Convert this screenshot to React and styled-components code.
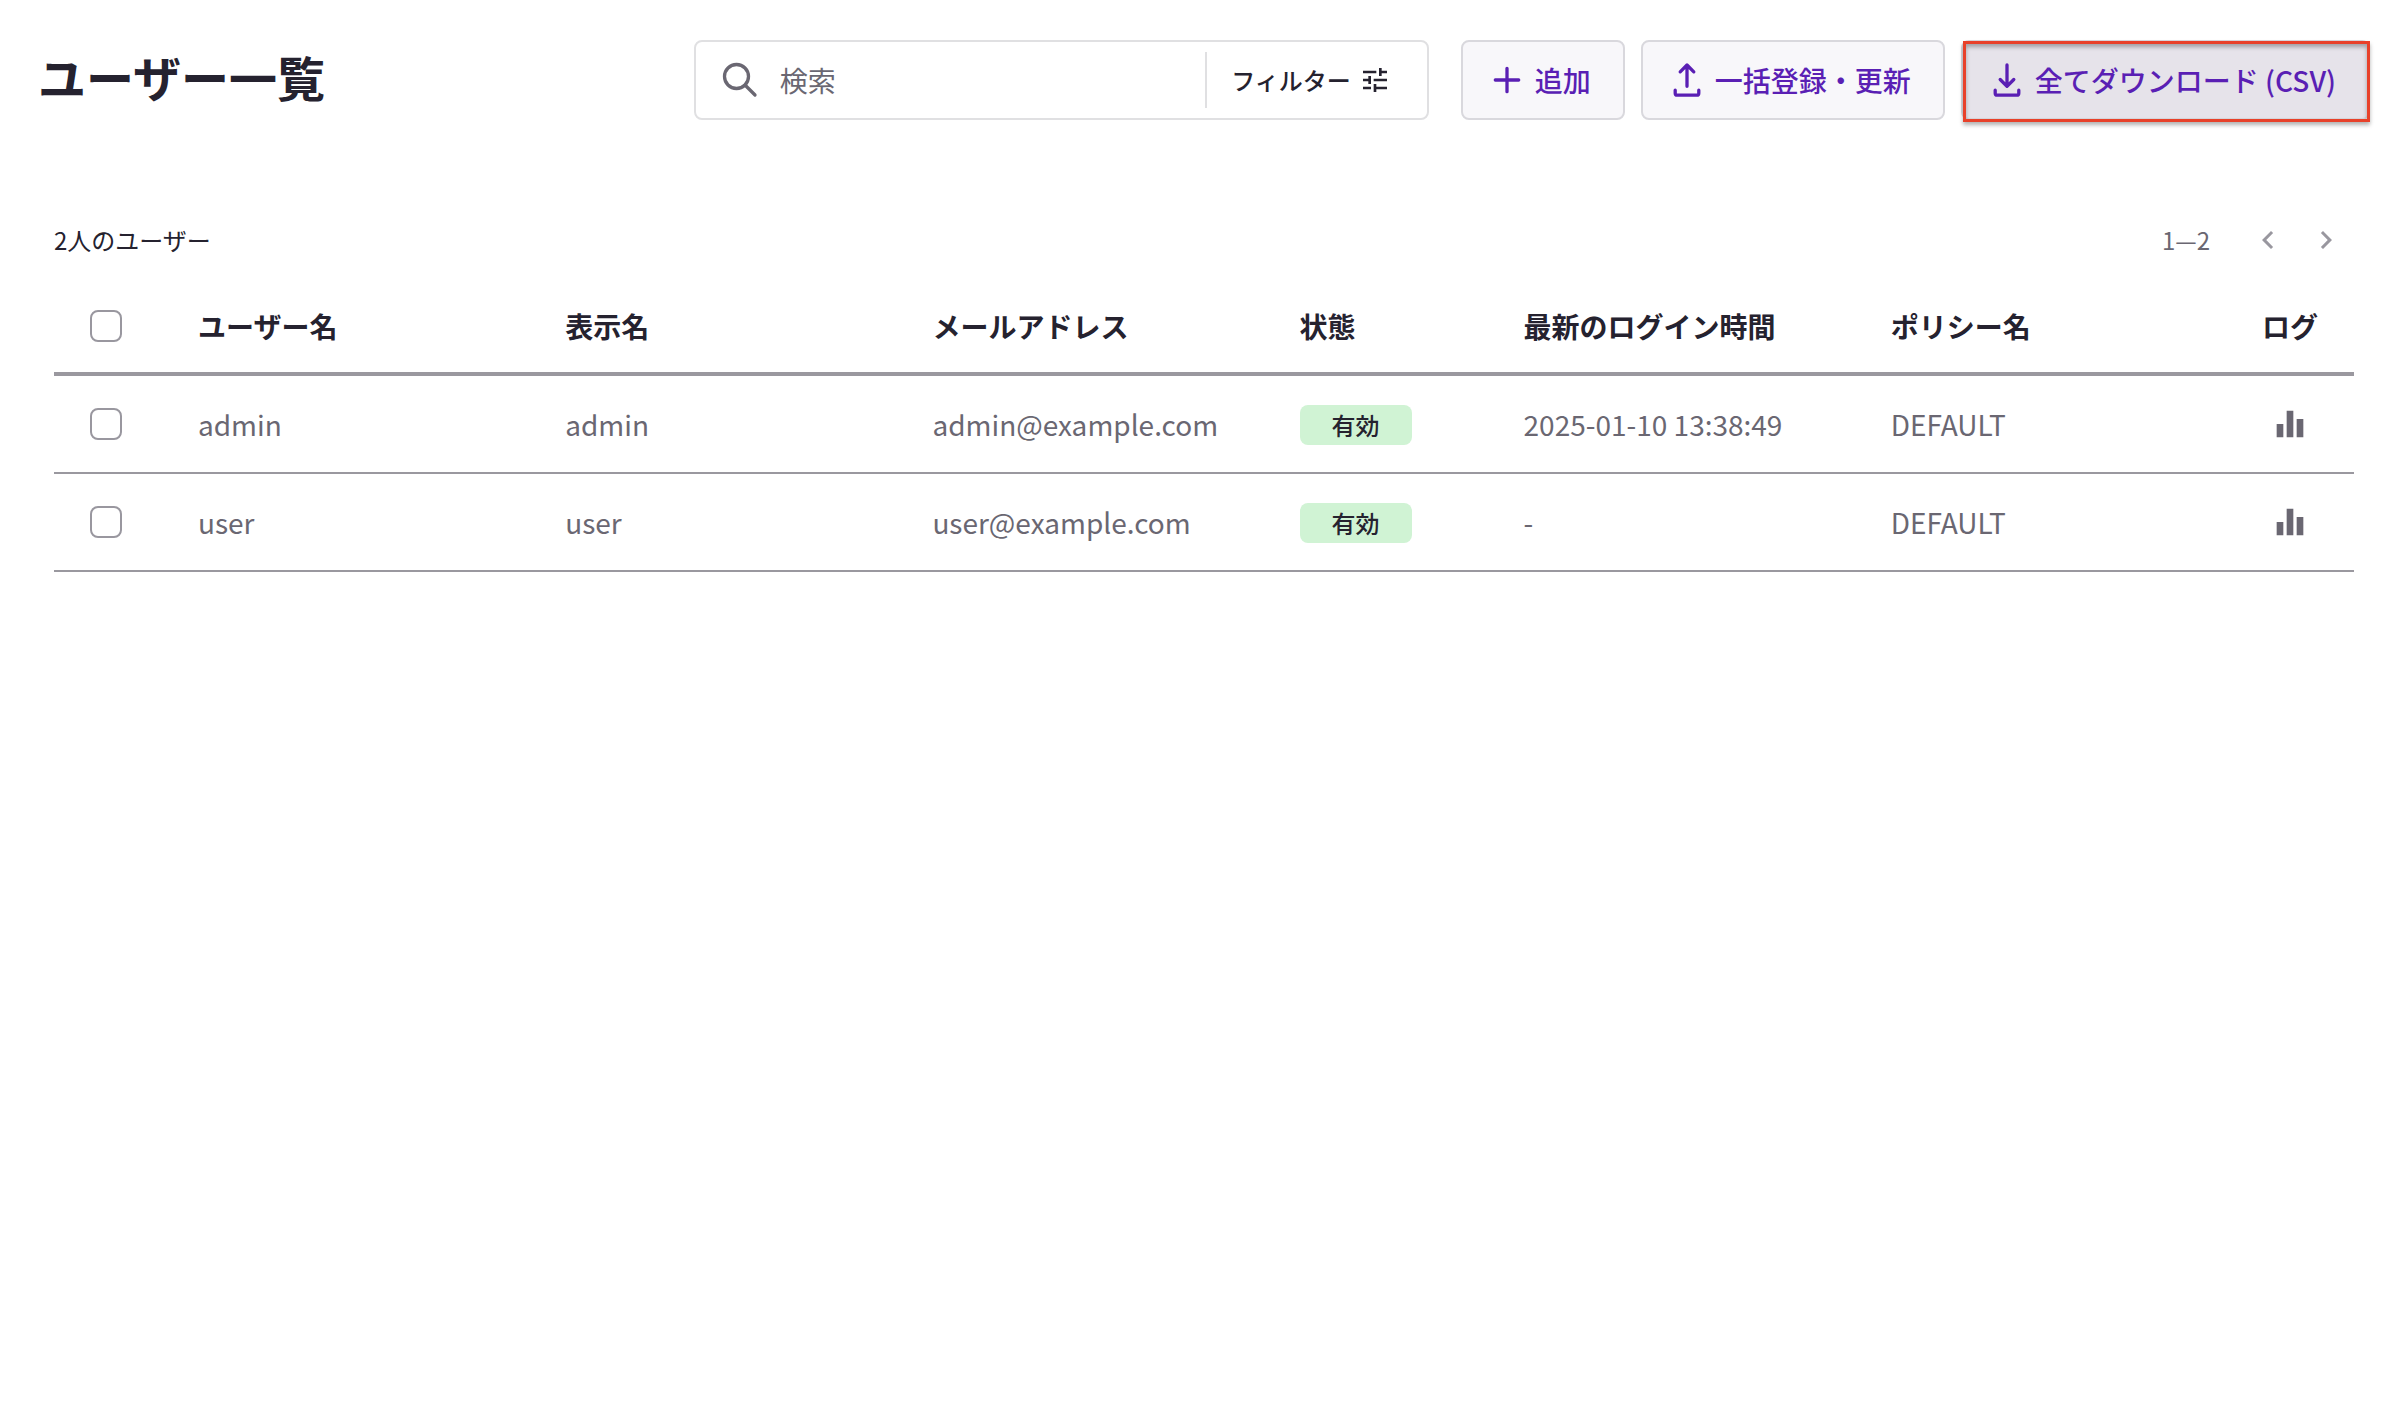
import React, { useState } from "react";
import styled, { createGlobalStyle } from "styled-components";

const users = [
  {
    name: "admin",
    displayName: "admin",
    email: "admin@example.com",
    status: "有効",
    lastLogin: "2025-01-10 13:38:49",
    policy: "DEFAULT",
  },
  {
    name: "user",
    displayName: "user",
    email: "user@example.com",
    status: "有効",
    lastLogin: "-",
    policy: "DEFAULT",
  },
];

const SearchIcon = () => (
  <StrokeIcon viewBox="0 0 40 40" $size={40}>
    <circle cx="16.5" cy="16.5" r="12" />
    <path d="M25 25l10 10" />
  </StrokeIcon>
);

const TuneIcon = () => (
  <FillIcon viewBox="0 0 24 24" $size={32}>
    <path d="M3 17v2h6v-2H3zM3 5v2h10V5H3zm10 16v-2h8v-2h-8v-2h-2v6h2zM7 9v2H3v2h4v2h2V9H7zm14 4v-2H11v2h10zm-6-4h2V7h4V5h-4V3h-2v6z" />
  </FillIcon>
);

const PlusIcon = () => (
  <StrokeIcon viewBox="0 0 40 40" $size={40}>
    <path d="M20 8.3v23.4M8.3 20h23.4" />
  </StrokeIcon>
);

const UploadIcon = () => (
  <StrokeIcon viewBox="0 0 40 40" $size={40}>
    <path d="M20 26.3V5.5M13.2 11.8L20 5l6.8 6.8M8.2 30.2v3q0 2 2 2h19.6q2 0 2-2v-3" />
  </StrokeIcon>
);

const DownloadIcon = () => (
  <StrokeIcon viewBox="0 0 40 40" $size={40}>
    <path d="M20 5v20.8M13.2 19.5l6.8 6.8 6.8-6.8M8.2 30.2v3q0 2 2 2h19.6q2 0 2-2v-3" />
  </StrokeIcon>
);

const ChevronLeftIcon = () => (
  <FillIcon viewBox="0 0 24 24" $size={36}>
    <path d="M15.41 7.41L14 6l-6 6 6 6 1.41-1.41L10.83 12z" />
  </FillIcon>
);

const ChevronRightIcon = () => (
  <FillIcon viewBox="0 0 24 24" $size={36}>
    <path d="M10 6L8.59 7.41 13.17 12l-4.58 4.59L10 18l6-6z" />
  </FillIcon>
);

const ChartIcon = () => (
  <FillIcon viewBox="0 0 24 24" $size={40}>
    <path d="M10 20h4V4h-4v16zm-6 0h4v-8H4v8zM16 9v11h4V9h-4z" />
  </FillIcon>
);

const App = () => {
  const [query, setQuery] = useState("");
  const [selected, setSelected] = useState([]);

  const toggleAll = () => {
    setSelected(selected.length === users.length ? [] : users.map((u) => u.name));
  };
  const toggleOne = (name) => {
    setSelected(
      selected.includes(name)
        ? selected.filter((n) => n !== name)
        : [...selected, name]
    );
  };

  return (
    <>
      <GlobalStyle />
      <Page>
        <Header>
          <Title>ユーザー一覧</Title>
          <SearchBar>
            <SearchLabel>
              <SearchIcon />
              <SearchInput
                type="text"
                aria-label="検索"
                placeholder="検索"
                value={query}
                onChange={(e) => setQuery(e.target.value)}
              />
            </SearchLabel>
            <FilterButton type="button">
              フィルター
              <TuneIcon />
            </FilterButton>
          </SearchBar>
          <Actions>
            <ActionButton type="button">
              <PlusIcon />
              追加
            </ActionButton>
            <ActionButton type="button">
              <UploadIcon />
              一括登録・更新
            </ActionButton>
            <Highlight>
              <ActionButton type="button" $active>
                <DownloadIcon />
                全てダウンロード (CSV)
              </ActionButton>
            </Highlight>
          </Actions>
        </Header>
        <main>
          <TableBar>
            <Count>2人のユーザー</Count>
            <Range>1—2</Range>
            <Pager aria-label="ページ">
              <PagerButton type="button" aria-label="前へ">
                <ChevronLeftIcon />
              </PagerButton>
              <PagerButton type="button" aria-label="次へ">
                <ChevronRightIcon />
              </PagerButton>
            </Pager>
          </TableBar>
          <Table>
            <colgroup>
              <Col $width={112} />
              <Col />
              <Col />
              <Col />
              <Col $width={224} />
              <Col />
              <Col />
              <Col $width={128} />
            </colgroup>
            <thead>
              <tr>
                <Th $check>
                  <Checkbox
                    type="checkbox"
                    aria-label="全て選択"
                    checked={selected.length === users.length}
                    onChange={toggleAll}
                  />
                </Th>
                <Th>ユーザー名</Th>
                <Th>表示名</Th>
                <Th>メールアドレス</Th>
                <Th>状態</Th>
                <Th>最新のログイン時間</Th>
                <Th>ポリシー名</Th>
                <Th $center>ログ</Th>
              </tr>
            </thead>
            <tbody>
              {users.map((user) => (
                <tr key={user.name}>
                  <Td $check>
                    <Checkbox
                      type="checkbox"
                      aria-label={user.name}
                      checked={selected.includes(user.name)}
                      onChange={() => toggleOne(user.name)}
                    />
                  </Td>
                  <Td>{user.name}</Td>
                  <Td>{user.displayName}</Td>
                  <Td>{user.email}</Td>
                  <Td>
                    <Badge>{user.status}</Badge>
                  </Td>
                  <Td>{user.lastLogin}</Td>
                  <Td>{user.policy}</Td>
                  <Td $center>
                    <LogButton type="button" aria-label="ログ">
                      <ChartIcon />
                    </LogButton>
                  </Td>
                </tr>
              ))}
            </tbody>
          </Table>
        </main>
      </Page>
    </>
  );
};

const GlobalStyle = createGlobalStyle`
  * {
    box-sizing: border-box;
  }
  body {
    margin: 0;
    background: #fff;
    color: #25222f;
    font-family: "Noto Sans CJK JP", sans-serif;
    font-size: 28px;
    line-height: 40px;
  }
  button,
  input {
    font: inherit;
    color: inherit;
  }
`;

const StrokeIcon = styled.svg`
  flex: none;
  display: block;
  width: ${(props) => props.$size}px;
  height: ${(props) => props.$size}px;
  fill: none;
  stroke: currentColor;
  stroke-width: 3.3;
  stroke-linecap: round;
  stroke-linejoin: round;
`;

const FillIcon = styled.svg`
  flex: none;
  display: block;
  width: ${(props) => props.$size}px;
  height: ${(props) => props.$size}px;
  fill: currentColor;
`;

const Page = styled.div`
  padding: 40px 36px 40px 38px;
`;

const Header = styled.header`
  display: flex;
  align-items: flex-start;
  gap: 32px;
`;

const Title = styled.h1`
  flex: 1;
  margin: 0;
  font-size: 48px;
  line-height: 72px;
  font-weight: 700;
  white-space: nowrap;
`;

const SearchBar = styled.div`
  flex: 0 1 735px;
  display: flex;
  align-items: center;
  height: 80px;
  border: 2px solid #e0e0e2;
  border-radius: 8px;
`;

const SearchLabel = styled.label`
  flex: 1;
  display: flex;
  align-items: center;
  gap: 20px;
  min-width: 0;
  padding-left: 24px;
  color: #6a6772;
`;

const SearchInput = styled.input`
  flex: 1;
  min-width: 0;
  padding: 0;
  border: none;
  outline: none;
  background: none;
  &::placeholder {
    color: #6a6772;
    opacity: 1;
  }
`;

const FilterButton = styled.button`
  display: flex;
  align-items: center;
  gap: 8px;
  height: 56px;
  padding: 0 36px 0 24px;
  border: none;
  border-left: 2px solid #e0e0e2;
  background: none;
  font-size: 24px;
  font-weight: 500;
  white-space: nowrap;
`;

const Actions = styled.div`
  display: flex;
  gap: 16px;
`;

const ActionButton = styled.button`
  display: flex;
  align-items: center;
  gap: 8px;
  height: 80px;
  padding: 0 32px 0 24px;
  border: 2px solid #d9d8dd;
  border-radius: 8px;
  background: ${(props) => (props.$active ? "#e6e3ea" : "#f8f7fa")};
  color: #5a1fb4;
  font-weight: 500;
  white-space: nowrap;
`;

/* marker frame laid over the button */
const Highlight = styled.div`
  position: relative;
  &::after {
    content: "";
    position: absolute;
    inset: 1px 0 -2px 2px;
    border: 3px solid #e8412a;
    box-shadow: 0 3px 4px rgba(0, 0, 0, 0.3),
      inset 0 3px 4px rgba(0, 0, 0, 0.3);
    pointer-events: none;
  }
`;

const TableBar = styled.div`
  display: flex;
  align-items: center;
  height: 80px;
  margin: 80px 18px 0 16px;
  font-size: 24px;
`;

const Count = styled.p`
  flex: 1;
  margin: 0;
`;

const Range = styled.span`
  color: #6a6772;
`;

const Pager = styled.nav`
  display: flex;
  gap: 6px;
  margin-left: 32px;
`;

const PagerButton = styled.button`
  padding: 8px;
  border: none;
  background: none;
  color: #99979f;
`;

const Table = styled.table`
  width: calc(100% - 32px);
  margin: 0 16px;
  border-spacing: 0;
  table-layout: fixed;
`;

const Col = styled.col`
  width: ${(props) => (props.$width ? `${props.$width}px` : "auto")};
`;

const Th = styled.th`
  height: 96px;
  padding: 0 ${(props) => (props.$center ? 0 : 32)}px;
  padding-left: ${(props) => (props.$check ? 36 : props.$center ? 0 : 32)}px;
  border-bottom: 4px solid #9a989f;
  text-align: ${(props) => (props.$center ? "center" : "left")};
  font-weight: 700;
  white-space: nowrap;
`;

const Td = styled.td`
  height: 98px;
  padding: 0 ${(props) => (props.$center ? 0 : 32)}px;
  padding-left: ${(props) => (props.$check ? 36 : props.$center ? 0 : 32)}px;
  border-bottom: 2px solid #9a989f;
  text-align: ${(props) => (props.$center ? "center" : "left")};
  color: #6a6772;
  white-space: nowrap;
`;

const Checkbox = styled.input`
  appearance: none;
  display: block;
  width: 32px;
  height: 32px;
  margin: 0;
  border: 2px solid #99979f;
  border-radius: 8px;
  background: #fff;
  &:checked {
    background: #5a1fb4;
  }
`;

const Badge = styled.span`
  display: inline-block;
  width: 112px;
  border-radius: 8px;
  background: #d0f3d4;
  color: #25222f;
  font-size: 24px;
  font-weight: 500;
  text-align: center;
`;

const LogButton = styled.button`
  display: block;
  margin: 0 auto;
  padding: 0;
  border: none;
  background: none;
  color: #6a6772;
`;

export default App;
